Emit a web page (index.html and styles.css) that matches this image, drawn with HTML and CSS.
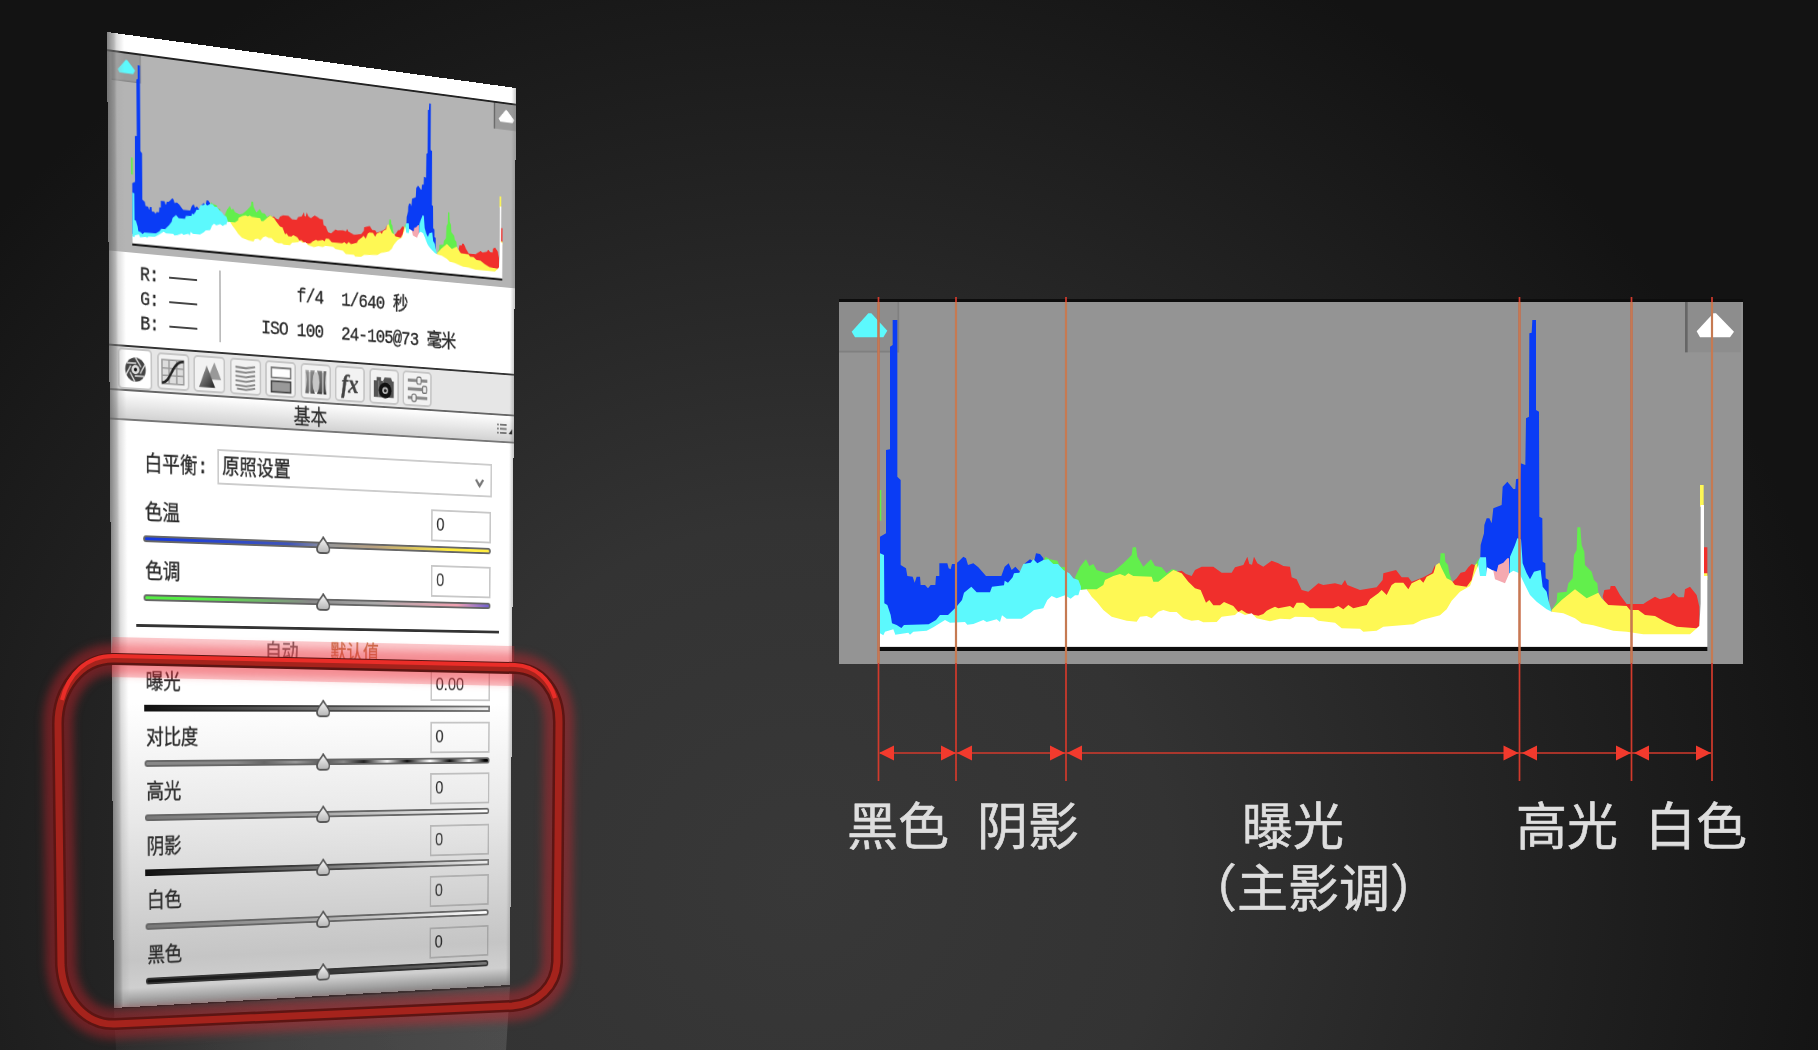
FILE: index.html
```html
<!DOCTYPE html>
<html lang="zh-CN">
<head>
<meta charset="utf-8">
<title>直方图与基本调整</title>
<link rel="stylesheet" href="styles.css">
</head>
<body>
<svg class="defs" width="0" height="0">
  <defs>
    <linearGradient id="drop" x1="0" y1="0" x2="0" y2="1"><stop offset="0" stop-color="#fafafa"/><stop offset="1" stop-color="#b5b5b5"/></linearGradient>
    <linearGradient id="tone" x1="0" y1="0" x2="1" y2="1"><stop offset="0" stop-color="#aaa"/><stop offset="1" stop-color="#222"/></linearGradient>
    <symbol id="thumb" viewBox="0 0 20 20"><path d="M10 1C12 5 18 9 18 13.500Q18 18 14 18H6Q2 18 2 13.500C2 9 8 5 10 1Z" fill="url(#drop)" stroke="#555" stroke-width="1.800"/></symbol>
    <symbol id="histogram" viewBox="27 36 2712 1086" preserveAspectRatio="none">
      <path class="well" d="M27 36H205V187H27ZM2565 36H2732V187H2565Z"/>
      <path class="well-edge" d="M2569 36V187"/>
      <path class="well-foot" d="M27 185H205V36"/>
      <path fill="#0a3cf5" d="M150 1018V740L168 730V480L180 478V170L188 165V90H202V560L212 570V825L228 835 232 858 248 860 254 878 260 860H270L272 885H285L294 895 302 885H316L318 858H328V820H352L356 835 362 838 366 822H376L385 815 400 800 408 805 414 825 430 820 445 832 468 858H514L524 830 536 820 545 840 556 830 570 845 585 820 600 808 612 815 618 790 630 792 640 805V1000L300 1018ZM1950 900V830L1952 765 1962 730 1963 705 1970 685H1978L1985 700 1990 655 2015 645 2018 590 2032 575 2050 597H2056L2058 568 2070 565 2072 520 2086 525 2088 385 2097 380 2098 130 2105 128 2107 90H2118V360L2127 365 2128 680 2137 685 2138 815 2146 820 2147 865 2156 870V940H2000Z"/>
      <path fill="#62ef4c" d="M143 600H154V692H143ZM640 820L646 800 660 808 682 812 690 830 705 832V860H650ZM735 862L750 830 768 808 778 828 790 822 800 840 830 850 850 845 880 820 905 795 908 772H918L922 800 940 830 963 808 975 828 995 832 1010 850 1025 838 1040 840V900H745ZM1828 835L1832 790H1844L1846 815 1854 825 1858 850 1865 870H1828ZM1935 825L1945 808 1952 810V850H1935ZM2165 960L2180 935 2182 908 2210 905 2215 880 2228 865 2232 795 2240 780 2242 712H2251L2255 765 2263 785 2265 825 2285 845 2292 870 2302 880 2305 908 2315 930Z"/>
      <path fill="#f02f2c" d="M1040 845L1055 842 1068 852 1085 858 1095 840 1115 830H1150L1175 848H1205L1215 832 1240 825 1252 800 1258 822 1266 824 1272 800 1282 820 1300 830 1325 812 1345 820 1360 828 1380 830 1385 862 1400 868 1415 900 1435 905 1465 880 1480 885 1515 880 1535 885 1545 870 1552 885 1590 900 1640 892 1658 870 1660 850 1698 840 1715 862H1735L1745 875 1780 862 1805 848 1815 825V985H1250L1135 950ZM1863 880L1880 865 1892 848 1905 845 1915 832 1925 822 1935 826V895H1870ZM2318 920L2323 900 2340 898 2342 888H2355L2370 915 2390 942H2440L2450 935 2475 920 2490 928 2520 920 2530 908 2545 922H2562L2565 898 2580 890 2600 915 2608 950V1020L2500 1010 2330 955ZM2622 772H2632V855H2622Z"/>
      <path fill="#5cf9fd" d="M150 1045V790L162 795 163 940 172 945 182 975 186 1000 200 1005 214 1014 222 1005 296 1003 318 990 330 975H354L378 952 396 930 402 908 424 890 440 907H480L486 890 522 886 524 872 534 878 548 862 552 850 568 848 580 822 602 818 610 808 622 820 640 810 655 808 670 822H684L700 840 718 850 730 865 745 870 753 890V1045ZM1943 860L1945 815 1950 802H1968L1971 860ZM2038 860L2040 800 2055 765 2062 745 2073 748 2078 820 2090 850 2100 868 2112 845 2132 840 2138 890 2150 905 2155 930 2165 965H2038Z"/>
      <path fill="#fef854" d="M770 898H800L820 885 825 870 850 858 870 852 885 858 895 850 910 858 965 860 970 875H985L1010 855 1030 840 1055 850 1075 875 1095 895 1112 900 1128 938 1138 930 1150 946H1170L1182 936 1210 948 1225 966 1235 960 1250 970 1285 977 1300 972 1310 962 1335 950 1345 955 1380 948 1390 955 1400 938H1420L1440 955H1510L1525 948 1540 958 1555 945 1570 955 1610 945 1620 928 1645 910 1655 900 1670 915 1685 885 1695 878H1720L1735 898 1745 880 1770 868 1780 878 1790 860 1810 850 1818 825 1828 818 1835 835 1850 865 1865 872 1875 885 1910 890 1925 870 1935 825 1942 820V1050H850ZM2165 960L2195 930 2235 898 2270 925 2305 908 2315 925 2335 945 2390 948 2400 960H2425L2445 975 2475 978 2505 995 2540 1010 2600 1015 2612 1005V1050H2165ZM2610 585H2621V650H2610ZM2622 850H2632V870H2622Z"/>
      <path fill="#f5a9b0" d="M1988 840L2000 845 2005 825 2020 818 2032 805H2037V900H1988Z"/>
      <path fill="#fff" d="M150 1070V1030L160 1036 165 1025 190 1018 196 1034 235 1028 240 1034 250 1025 290 1022 310 1012 345 990 360 998 405 996 412 1004 430 1002 460 990 470 996 500 988 510 996 516 976 530 986H575L600 970 612 960 640 955 652 930 665 918 680 925 705 916 722 926 735 916H745L750 900 770 898 785 920 800 935 820 960 845 980 890 992 920 995 930 980 950 978 965 985 985 965 1000 960 1020 966H1040L1060 985 1085 992 1105 990 1120 997 1160 996 1175 980 1215 975 1225 965 1245 975 1265 970 1280 985 1320 994 1350 986 1380 988 1395 980 1450 982 1465 992 1515 998 1535 1015 1590 1016 1600 1025 1640 1022 1660 1010 1750 1003 1775 990 1830 976 1850 958 1865 932 1890 905 1920 888 1930 860 1945 825 1950 858H1968L1971 832 1990 842 1995 868 2025 880 2038 850 2050 842 2068 850 2085 885 2100 915 2120 935 2150 958 2165 965 2200 970 2235 985 2255 1000 2290 1006 2350 1022 2390 1025 2440 1033H2580L2608 1008 2612 940V645H2622V858H2632V1070Z"/>
      <path fill="#5cf9fd" d="M65 125L115 70H124L172 122 160 142H75Z"/>
      <path fill="#fff" d="M2600 124L2650 70H2658L2712 125 2700 142H2610Z"/>
      <path d="M148 1077H2632" stroke="#0c0c0c" stroke-width="12"/>
    </symbol>
  </defs>
</svg>

<main class="stage">
  <section class="panel">
    <div class="scope"><svg><use href="#histogram"/></svg></div>
    <div class="info">
      <ul class="rgb"><li>R:<i></i></li><li>G:<i></i></li><li>B:<i></i></li></ul>
      <dl class="exif"><dt>f/4</dt><dd>1/640 秒</dd><dt>ISO 100</dt><dd>24-105@73 毫米</dd></dl>
    </div>
    <nav class="tabs">
      <span class="tab active"><svg viewBox="0 0 34 32"><circle cx="17" cy="16" r="13" fill="#444"/><g stroke="#ddd" stroke-width="1.600"><path d="M17 3L24 13M29 10L23 20M28 23L16 23M16 29L10 19M5 22L11 12M6 9L18 9"/></g><circle cx="17" cy="16" r="5" fill="#ddd"/><circle cx="17" cy="16" r="2" fill="#111"/></svg></span>
      <span class="tab"><svg viewBox="0 0 34 32"><path d="M3 3H31V29H3ZM12 3V29M22 3V29M3 12H31M3 20H31" fill="#ddd" stroke="#999" stroke-width="1.800"/><path d="M3 28C16 27 14 5 31 4" fill="none" stroke="#222" stroke-width="3"/></svg></span>
      <span class="tab"><svg viewBox="0 0 34 32"><path d="M23 2L32 21H14Z" fill="#999"/><path d="M13 6L24 30H3Z" fill="url(#tone)"/></svg></span>
      <span class="tab"><svg viewBox="0 0 34 32"><path d="M4 5L18 6 30 4M4 10L18 11 30 9M4 15L18 16 30 14M4 20L18 21 30 19M4 25L18 26 30 24M6 29L18 30 30 28" fill="none" stroke="#888" stroke-width="2.200"/></svg></span>
      <span class="tab"><svg viewBox="0 0 34 32"><rect x="4" y="3" width="26" height="11" fill="#fff" stroke="#777" stroke-width="2"/><rect x="4" y="18" width="26" height="12" fill="#999" stroke="#444" stroke-width="2"/></svg></span>
      <span class="tab"><svg viewBox="0 0 34 32"><path d="M3 3Q7 12 3 29H8V3ZM10 3V29H16Q10 16 16 3ZM19 3Q26 16 19 29H26V3ZM28 3V29H32Q28 16 32 3Z" fill="url(#tone)"/><path d="M3 5H32V27H3Z" fill="#777" fill-opacity=".35"/></svg></span>
      <span class="tab fx">fx</span>
      <span class="tab"><svg viewBox="0 0 34 32"><path d="M3 9H7V5H13V9H16L18 5H27L29 9H31V28H3Z" fill="#555"/><path d="M10 9V28M16 9V15" stroke="#999"/><circle cx="19" cy="20" r="9" fill="#111"/><circle cx="19" cy="20" r="4" fill="#bbb"/><circle cx="19" cy="20" r="2" fill="#222"/></svg></span>
      <span class="tab"><svg viewBox="0 0 34 32"><path d="M3 6H31M3 16H31M3 26H31" stroke="#888" stroke-width="3.500"/><g fill="#eee" stroke="#777" stroke-width="1.500"><rect x="16" y="2" width="6" height="8" rx="2"/><rect x="24" y="12" width="6" height="8" rx="2"/><rect x="9" y="22" width="6" height="8" rx="2"/></g></svg></span>
    </nav>
    <header class="title">基本<svg class="menu" viewBox="0 0 22 14"><path d="M1 2H3M5 2H14M1 6.500H3M5 6.500H14M1 11H3M5 11H14" stroke="#777" stroke-width="2"/><path d="M22 6V12H17Z" fill="#222"/></svg></header>
    <div class="balance"><label>白平衡:</label><div class="select">原照设置<svg viewBox="0 0 14 14"><path d="M2 3L7 10 12 3" fill="none" stroke="#777" stroke-width="3"/></svg></div></div>
    <div class="row wide"><label>色温</label><b>0</b><div class="track temp"><svg><use href="#thumb"/></svg></div></div>
    <div class="row wide"><label>色调</label><b>0</b><div class="track tint"><svg><use href="#thumb"/></svg></div></div>
    <hr>
    <div class="presets"><span>自动</span><span class="default">默认值</span></div>
    <div class="row"><label>曝光</label><b>0.00</b><div class="track ramp"><svg><use href="#thumb"/></svg></div></div>
    <div class="row"><label>对比度</label><b>0</b><div class="track contrast"><svg><use href="#thumb"/></svg></div></div>
    <div class="row"><label>高光</label><b>0</b><div class="track light"><svg><use href="#thumb"/></svg></div></div>
    <div class="row"><label>阴影</label><b>0</b><div class="track ramp"><svg><use href="#thumb"/></svg></div></div>
    <div class="row"><label>白色</label><b>0</b><div class="track light"><svg><use href="#thumb"/></svg></div></div>
    <div class="row"><label>黑色</label><b>0</b><div class="track dark"><svg><use href="#thumb"/></svg></div></div>
  </section>

  <figure class="diagram">
    <svg class="chart"><use href="#histogram"/></svg>
    <svg class="guides" viewBox="839 297 904 484">
      <path class="line-low" d="M878.500 297V781M956 297V781M1066 297V781M1519.500 297V781M1631.500 297V781M1712 297V781M880 753H1711"/>
      <path class="line-high" d="M878.500 302V663M956 302V663M1066 302V663M1519.500 302V663M1631.500 302V663M1712 302V663"/>
      <path fill="#f23a2d" d="M879 753L894 745.500V760.500ZM956 753L941 745.500V760.500ZM957 753L972 745.500V760.500ZM1065 753L1050 745.500V760.500ZM1067 753L1082 745.500V760.500ZM1518.500 753L1503.500 745.500V760.500ZM1522 753L1537 745.500V760.500ZM1631 753L1616 745.500V760.500ZM1634 753L1649 745.500V760.500ZM1711 753L1696 745.500V760.500Z"/>
    </svg>
    <figcaption><span>黑色</span><span>阴影</span><span>曝光<em>（主影调）</em></span><span>高光</span><span>白色</span></figcaption>
  </figure>
  <div class="reflection"></div>
  <svg class="ring" viewBox="0 0 620 1050">
    <defs><path id="loop" d="M115 659L515 668C542 669 559 692 559 722L557 962C556 986 538 1004 512 1006L115 1024C86 1025 63 1000 61 965L58 724C58 690 80 658 115 659Z"/></defs>
    <use class="glow" href="#loop"/>
    <path class="bloom" d="M112 657L514 666"/>
    <use class="tube-dark" href="#loop"/>
    <use class="tube" href="#loop"/>
    <path class="shine" d="M62 700C68 675 86 655 115 656L515 665C536 666 550 680 555 698"/>
  </svg>
</main>
</body>
</html>
```
FILE: styles.css
```css
* { box-sizing: border-box; margin: 0; padding: 0; }
body {
  width: 1818px; height: 1050px; overflow: hidden;
  font-family: "Liberation Mono", "Noto Sans CJK SC", sans-serif;
  background: radial-gradient(ellipse 1060px 1020px at 800px 880px, #383838 0, #333 35%, #242424 65%, #131313 100%);
}
.defs { position: absolute; }
.stage { display: flex; align-items: flex-start; position: relative; width: 1818px; height: 1050px; overflow: hidden; }
ul { list-style: none; }

/* tilted adjustment panel */
.panel {
  flex: none; width: 520px; height: 1000px; position: relative; color: #2a2a2a;
  font-size: 21.5px; line-height: 22px; -webkit-text-stroke: .35px;
  background: linear-gradient(#fff 0, #fff 68%, #e9e9e9 80%, #d6d6d6 88%, #c5c5c5 95%, #cfcfcf 98%, #888 100%);
  padding-top: 17px;
  transform-origin: 0 0;
  transform: matrix3d(.87481, .12275, 0, .00017106, .010897, 1.01045, 0, .00003418, 0, 0, 1, 0, 107, 32, 0, 1);
}
.panel::after {
  content: ""; position: absolute; inset: 0;
  background: linear-gradient(90deg, #666c 0, #7778 8px, #aaa6 11px, #fff0 20px, #fff0 514px, #7776 520px);
}
.scope { height: 201px; padding-left: 5px; background: #b4b4b4; border-top: 2px solid #222; overflow: hidden; }
.scope svg { display: block; width: 518px; height: 199px; }
.well { fill: #888; fill-opacity: .6; }
.well-edge { fill: none; stroke: #666; stroke-width: 8; }
.well-foot { fill: none; stroke: #808080; stroke-width: 5; }
.info { height: 96px; display: flex; padding-top: 10px; border-bottom: 2px solid #333; }
.rgb { width: 135px; height: 74px; padding-left: 37px; border-right: 2px solid #bbb; }
.rgb li { height: 24.700px; display: flex; align-items: center; font-size: 20px; letter-spacing: -1px; }
.rgb i { width: 34px; height: 2px; margin-left: 13px; background: #444; }
.exif { display: grid; grid-template-columns: 129px 1fr; column-gap: 23px; grid-auto-rows: 36px; font-size: 20.500px; letter-spacing: -1px; padding-top: 9px; }
.exif dt { text-align: right; }
.exif dd { white-space: nowrap; }
.tabs { height: 45px; display: flex; gap: 5.500px; padding: 3px 0 0 10px; background: #e6e6e6; border-bottom: 2px solid #666; }
.tab { width: 39px; height: 38px; display: grid; place-items: center; border: 2px solid #c6c6c6; border-radius: 5px; background: #f2f2f2; }
.tab.active { width: 41px; height: 42px; margin-top: -2px; background: #fff; }
.tab svg { width: 32px; height: 31px; }
.fx { font: italic bold 27px/30px "Liberation Serif", serif; color: #444; }
.title { height: 30px; position: relative; text-align: center; padding: 5px 25px 0 0; background: linear-gradient(#fff, #d2d2d2); border-bottom: 2px solid #777; }
.menu { position: absolute; right: 2px; top: 8px; width: 22px; height: 14px; }
.balance { display: flex; margin: 24px 30px 0 41px; height: 37px; align-items: center; }
.balance label { width: 89px; padding-top: 3px; }
.select { width: 360px; height: 37px; border: 2px solid #ccc; display: flex; justify-content: space-between; align-items: center; padding: 0 8px 0 4px; }
.select svg { width: 14px; height: 14px; margin-top: 6px; }
.row { height: 57.500px; display: grid; grid-template-columns: 368px 82px; grid-template-rows: 35px 6px; row-gap: 5px; margin-left: 39px; align-content: start; }
.row.wide { height: 60.500px; position: relative; top: 16px; }
.row label { padding: 6px 0 0 2px; letter-spacing: -.3px; }
.row b { border: 2px solid rgba(110, 110, 110, .38); font: 20px/23px "Liberation Sans", sans-serif; letter-spacing: 0; padding: 3px 5px; -webkit-text-stroke: 0; }
.track { grid-column: 1 / 3; height: 7px; border: 2px solid #666; border-radius: 4px; position: relative; }
.track svg { position: absolute; left: 213px; top: -8px; width: 20px; height: 20px; }
.temp { background: linear-gradient(90deg, #1538e0, #4055b8 40%, #999 52%, #b8a080 65%, #ffec40 88%); }
.tint { background: linear-gradient(90deg, #55ed45 15%, #888 46%, #aaa 65%, #f0a0b0 90%, #7060d0); }
.ramp { background: linear-gradient(90deg, #111, #777 50%, #eee); border-image: linear-gradient(90deg, #111, #777) 1; }
.light { background: linear-gradient(90deg, #777, #aaa 50%, #fff); }
.dark { background: linear-gradient(90deg, #111, #333 50%, #777); border-color: #333; }
.contrast { background: linear-gradient(90deg, #888 25%, #666 33%, #999 42%, #555 50%, #888 56%, #222 62%, #eee 69%, #111 75%, #fff 82%, #111 88%, #fff 94%, #000 99%); }
hr { width: 471px; height: 3px; margin: 27px 0 0 30px; border: 0; background: #333; }
.presets { display: flex; gap: 41px; margin: 14px 0 0 189px; height: 27px; color: #666; }
.default { color: #c08050; }
.reflection {
  position: absolute; left: 114px; top: 987px; width: 396px; height: 63px;
  background: linear-gradient(90deg, #303030, #484848 40%, #555); opacity: .75;
  clip-path: polygon(0 22px, 100% 0, 99% 100%, .5% 100%);
}

/* histogram diagram */
.diagram { width: 904px; margin: 302px 0 0 319px; position: relative; }
.chart { display: block; width: 904px; height: 362px; background: #949494; box-shadow: 0 -3px 0 #0d0d0d; }
.guides { position: absolute; left: 0; top: -5px; width: 904px; height: 484px; }
.line-low { fill: none; stroke: #d23a2c; stroke-width: 1.700; }
.line-high { fill: none; stroke: #c67a52; stroke-width: 2.200; }
figcaption { display: flex; margin: 124px 0 0 8px; font: 51px/70px "Noto Sans CJK SC", sans-serif; color: #dedede; -webkit-text-stroke: .6px; white-space: nowrap; }
figcaption span { width: 102px; flex: none; margin-right: 28px; }
figcaption span:nth-child(2) { margin-right: 163px; }
figcaption span:nth-child(3) { margin-right: 172px; }
figcaption span:nth-child(4) { margin-right: 27px; }
figcaption em { display: block; font-style: normal; line-height: 55px; margin-left: -56px; }

/* highlight ring */
.ring { position: absolute; left: 0; top: 0; width: 620px; height: 1050px; fill: none; }
.glow { stroke: #e8222c; stroke-width: 30; stroke-opacity: .38; filter: blur(4px); }
.bloom { stroke: #f0303c; stroke-width: 40; stroke-opacity: .25; }
.tube-dark { stroke: #5c1513; stroke-width: 12; }
.tube { stroke: #a5231c; stroke-width: 7; }
.shine { stroke: #ea2d28; stroke-width: 4; }
```
